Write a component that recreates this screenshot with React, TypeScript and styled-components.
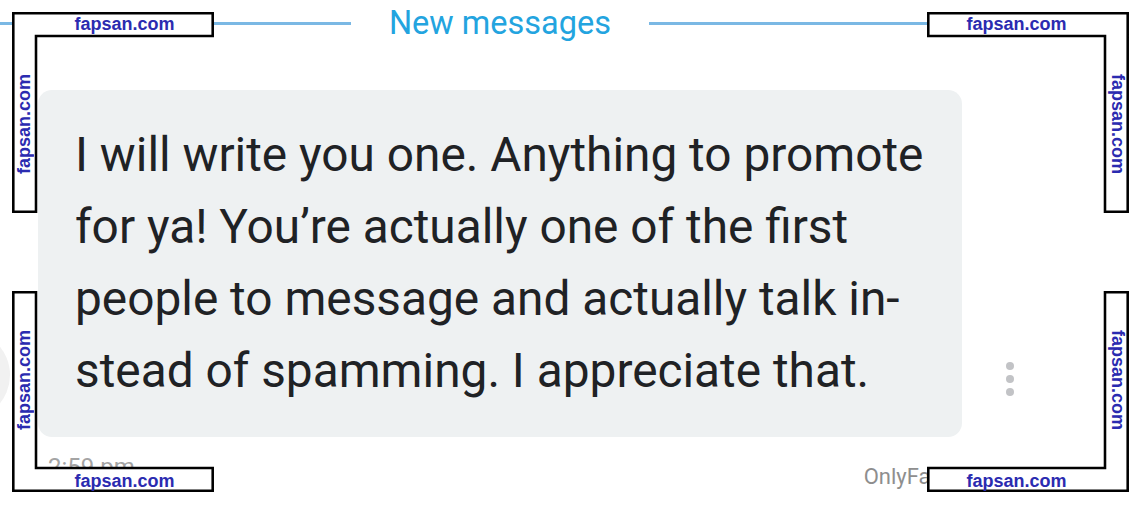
import React from "react";
import styled, { createGlobalStyle } from "styled-components";

const GlobalStyle = createGlobalStyle`
  html, body {
    margin: 0;
    padding: 0;
    background: #ffffff;
  }
  body {
    font-family: Roboto, "Noto Sans", "Liberation Sans", sans-serif;
  }
`;

const Page = styled.div`
  position: relative;
  width: 1142px;
  height: 506px;
  overflow: hidden;
  background: #ffffff;
`;

const Divider = styled.div`
  display: flex;
  align-items: center;
  gap: 38px;
  width: 1000px;
  height: 46px;

  & > .line {
    flex: 1;
    height: 3px;
    background: #7ab8e4;
  }

  & > .label {
    font-size: 32.5px;
    line-height: 46px;
    color: #23a4df;
  }
`;

const MessageRow = styled.div`
  display: flex;
  align-items: flex-end;
  margin-top: 44px;
`;

const Avatar = styled.div`
  width: 90px;
  height: 90px;
  margin-left: -80px;
  margin-right: 28px;
  margin-bottom: 17px;
  border-radius: 50%;
  background: #f1f1f1;
  flex-shrink: 0;
`;

const Bubble = styled.div`
  box-sizing: border-box;
  width: 924px;
  height: 347px;
  padding: 29px 10px 30px 37px;
  border-radius: 14px;
  background: #eef1f2;
  color: #1f2225;
  font-size: 47.8px;
  line-height: 72px;
  white-space: nowrap;
`;

const MenuDots = styled.div`
  display: flex;
  flex-direction: column;
  gap: 5px;
  margin-left: 44px;
  margin-bottom: 41px;

  & > span {
    width: 8px;
    height: 8px;
    border-radius: 50%;
    background: #c2c3c6;
  }
`;

const Footer = styled.div`
  display: flex;
  justify-content: space-between;
  align-items: flex-start;
  width: 924px;
  margin-left: 38px;

  & > .time {
    padding-left: 10px;
    margin-top: 16px;
    font-size: 24px;
    color: #a4a4a4;
  }

  & > .source {
    padding-right: 8px;
    margin-top: 27px;
    font-size: 22px;
    color: #8e8e8e;
  }
`;

type Corner = "tl" | "tr" | "bl" | "br";

const MarkBox = styled.div<{ $left: number; $top: number }>`
  position: absolute;
  left: ${(p) => p.$left}px;
  top: ${(p) => p.$top}px;
  width: 202px;
  height: 201px;

  & > svg {
    position: absolute;
    inset: 0;
  }
`;

const MarkLabel = styled.div<{ $vertical?: boolean; $flip?: boolean }>`
  position: absolute;
  display: flex;
  align-items: center;
  justify-content: center;
  font-family: "Liberation Sans", Arial, sans-serif;
  font-weight: bold;
  font-size: 18px;
  line-height: 1;
  color: #2b2bb0;

  & > span {
    display: block;
    ${(p) => (p.$vertical ? "writing-mode: vertical-rl;" : "")}
    ${(p) => (p.$flip ? "transform: rotate(180deg);" : "")}
  }
`;

const W = 202;
const H = 201;
const T = 23;

const shapes: Record<Corner, string> = {
  tl: `0,0 ${W},0 ${W},${T} ${T},${T} ${T},${H} 0,${H}`,
  tr: `0,0 ${W},0 ${W},${H} ${W - T},${H} ${W - T},${T} 0,${T}`,
  bl: `0,0 ${T},0 ${T},${H - T} ${W},${H - T} ${W},${H} 0,${H}`,
  br: `${W - T},0 ${W},0 ${W},${H} 0,${H} 0,${H - T} ${W - T},${H - T}`,
};

const Watermark = ({ corner, left, top }: { corner: Corner; left: number; top: number }) => {
  const isTop = corner[0] === "t";
  const isLeft = corner[1] === "l";
  const hStyle = {
    left: isLeft ? T : 0,
    top: isTop ? 0 : H - T,
    width: W - T,
    height: T,
  };
  const vStyle = {
    left: isLeft ? 0 : W - T,
    top: isTop ? T : 0,
    width: T,
    height: H - T,
  };
  return (
    <MarkBox $left={left} $top={top}>
      <svg width={W} height={H} viewBox={`0 0 ${W} ${H}`}>
        <polygon
          points={shapes[corner]}
          fill="#ffffff"
          stroke="#000000"
          strokeWidth={2.6}
          transform={`translate(1.3 1.3) scale(${(W - 2.6) / W} ${(H - 2.6) / H})`}
        />
      </svg>
      <MarkLabel style={hStyle}>
        <span>fapsan.com</span>
      </MarkLabel>
      <MarkLabel $vertical $flip={isLeft} style={vStyle}>
        <span>fapsan.com</span>
      </MarkLabel>
    </MarkBox>
  );
};

const lines = [
  "I will write you one. Anything to promote",
  "for ya! You\u2019re actually one of the first",
  "people to message and actually talk in-",
  "stead of spamming. I appreciate that.",
];

export default function App() {
  return (
    <>
      <GlobalStyle />
      <Page>
        <Divider>
          <div className="line" />
          <div className="label">New messages</div>
          <div className="line" />
        </Divider>
        <MessageRow>
          <Avatar />
          <Bubble>
            {lines.map((l, i) => (
              <div key={i}>{l}</div>
            ))}
          </Bubble>
          <MenuDots>
            <span />
            <span />
            <span />
          </MenuDots>
        </MessageRow>
        <Footer>
          <div className="time">2:59 pm</div>
          <div className="source">OnlyFans</div>
        </Footer>
        <Watermark corner="tl" left={12} top={12} />
        <Watermark corner="tr" left={927} top={12} />
        <Watermark corner="bl" left={12} top={291} />
        <Watermark corner="br" left={927} top={291} />
      </Page>
    </>
  );
}
